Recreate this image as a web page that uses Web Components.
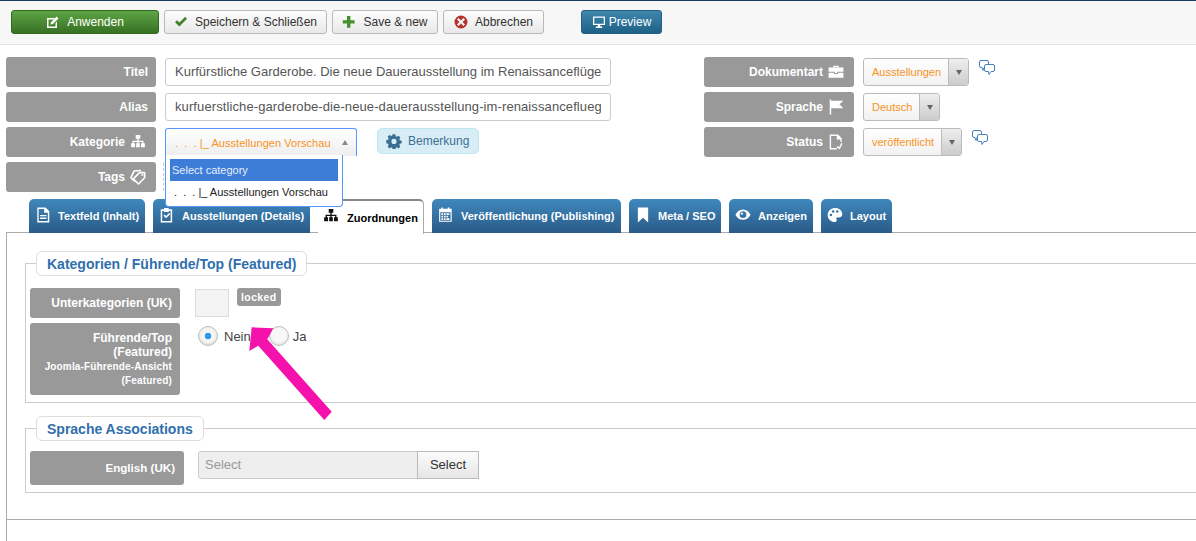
<!DOCTYPE html>
<html lang="de">
<head>
<meta charset="utf-8">
<title>Artikel bearbeiten</title>
<style>
html, body { margin: 0; padding: 0; background: #fff; }
body { width: 1196px; height: 541px; overflow: hidden; position: relative; font-family: "Liberation Sans", Arial, sans-serif; font-size: 13px; color: #555; }
</style>
</head>
<body>
<edit-page></edit-page>
<script>
// Kleine Helfer fuer die Icons
const ICONS = {
    edit: '<path d="M1 3h8L7.5 4.5H2.5v7h7V8L11 6.5V13H1z"/><path d="M5 7.2 10.6 1.6l1.9 1.9L6.9 9.1 4.6 9.5z"/>',
    check: '<path d="M1 7.2 3 5.2 5.4 7.6 11.2 1.8 13 3.8 5.4 11.4z"/>',
    plus: '<path d="M5 1h3.4v4.2h4.2v3.4H8.4v4.2H5V8.6H.8V5.2H5z"/>',
    cancel: '<path fill-rule="evenodd" d="M7 .5a6.5 6.5 0 1 1 0 13 6.5 6.5 0 0 1 0-13zM4.6 3 3 4.6 5.4 7 3 9.4 4.6 11 7 8.6 9.4 11 11 9.4 8.6 7 11 4.6 9.4 3 7 5.4z"/>',
    screen: '<path fill-rule="evenodd" d="M1 1.5h12v8.5H8.2v1.5h2V13H3.8v-1.5h2V10H1zM2.3 2.8v5.9h9.4V2.8z"/>',
    tree: '<path d="M5 .8h4v3.4H7.600v1.600h4.200v2.400H13v3.400H9.600V8.200h1V7H7.600v1.200h1v3.400H5.400V8.200h1V7h-3v1.200h1v3.400H1V8.200h1.200V5.800h4.200V4.200H5z"/>',
    tag: '<g fill="none" stroke="#fff" stroke-width="1.400" stroke-linejoin="round"><path d="M8.300 3.200h4.500v4.500l-5.400 5.400-4.500-4.500z"/><path d="M9.700 1.300 3.500 1.800 .8 7.600 4 11"/></g><circle cx="10.800" cy="5.200" r=".9"/>',
    case: '<path fill-rule="evenodd" d="M4.600 3V1.600h4.800V3H13.500v3.800H8v1H6v-1H.5V3zM5.800 2.600V3h2.400v-.4z"/><path d="M.5 7.600H5.200v1.200h3.600V7.600h4.700V12H.5z"/>',
    flag: '<path d="M1.500 .5h1.300v1h10.700L10 4.700l3.500 3.300H2.800v5.500H1.500z"/>',
    status: '<path fill-rule="evenodd" d="M1.500 .5h7.300L12 3.700V7h-1.200V4.800H7.700V1.700H2.700v10.600h5v1.200H1.500z"/><path d="M11.600 7.600l1 .9-2.300 4.800-2.800-1.700.7-1 1.600.9z"/>',
    doc: '<path fill-rule="evenodd" d="M2 .5h7.200L12.500 3.800v9.700H2zM3.200 1.700v10.600h8V5H8V1.700zM4.500 7h5.500v1.200H4.500zM4.500 9.200h5.500v1.400H4.500z"/>',
    clip: '<path fill-rule="evenodd" d="M1.500 2h3V.8h4V2h3v11.500h-10zM2.800 3.400v8.800h7.400V3.400H8.600v1H4.400v-1z"/><path d="M3.900 7.600l1-1 1.300 1.300 2.700-2.700 1 1-3.700 3.700z"/>',
    cal: '<path fill-rule="evenodd" d="M1 1.500h2V.5h1.500v1h4v-1H10v1h2v11.500H1zM2 4.500v7.500h9V4.500z"/><path d="M3 5.500h1.500V7H3zM5.200 5.500h1.500V7H5.200zM7.400 5.500h1.500V7H7.400zM9 5.500h1V7H9zM3 7.600h1.500v1.500H3zM5.200 7.600h1.500v1.500H5.200zM7.400 7.600h1.500v1.500H7.400zM3 9.800h1.500v1.500H3zM5.200 9.800h1.500v1.500H5.200zM7.400 9.800h2.600v1.500H7.400z"/>',
    bookmark: '<path d="M2.500 .5h9v13L7 9.500l-4.500 4z"/>',
    eye: '<path fill-rule="evenodd" d="M7 2.200c3 0 5.400 2 6.600 4.600C12.400 9.400 10 11.200 7 11.200S1.600 9.400.4 6.800C1.600 4.200 4 2.200 7 2.200zM7 3.800a2.900 2.900 0 1 0 0 5.800 2.900 2.900 0 0 0 0-5.800zM6 4.800a1 1 0 1 1 0 2 1 1 0 0 1 0-2z"/>',
    palette: '<path fill-rule="evenodd" d="M7 .8c3.600 0 6.400 2.300 6.400 5.300 0 2-1.500 3.100-3.200 3.100H8.800c-.8 0-1 .9-.5 1.500.6.8.2 2.500-1.500 2.500C3.300 13.200.6 10.400.6 7 .6 3.500 3.400.8 7 .8zM3.400 5.800a1.100 1.100 0 1 0 0 2.200 1.100 1.100 0 0 0 0-2.200zM5.400 2.800a1.100 1.100 0 1 0 0 2.200 1.100 1.100 0 0 0 0-2.200zM9 2.800A1.100 1.100 0 1 0 9 5a1.100 1.100 0 0 0 0-2.200z"/>',
    gear: '<path fill-rule="evenodd" d="M5.700.6h2.600l.4 1.800 1.100.5 1.600-1 1.800 1.800-1 1.600.5 1.100 1.800.4v2.600l-1.800.4-.5 1.100 1 1.600-1.800 1.800-1.600-1-1.100.5-.4 1.800H5.700l-.4-1.800-1.100-.5-1.600 1-1.800-1.800 1-1.600-.5-1.100-1.800-.4V6.200l1.800-.4.5-1.100-1-1.600 1.800-1.800 1.600 1 1.100-.5zM7 5a2.500 2.500 0 1 0 0 5 2.500 2.500 0 0 0 0-5z" transform="translate(.7 .6) scale(.9)"/>'
};

function icon(name, size, color) {
    return `<svg width="${size}" height="${size}" viewBox="0 0 14 14" fill="${color}" aria-hidden="true">${ICONS[name]}</svg>`;
}

const CHAT = `<svg class="chat" width="16" height="15" viewBox="0 0 16 15" fill="#fff" stroke="#4a7fc0" stroke-width="1"><path d="M2 .5h6a1.500 1.500 0 0 1 1.500 1.500v4A1.500 1.500 0 0 1 8 7.500H5l-1 3-1-3H2A1.500 1.500 0 0 1 .5 6V2A1.500 1.500 0 0 1 2 .5z"/><path d="M7 4.500h7A1.500 1.500 0 0 1 15.500 6v4a1.500 1.500 0 0 1-1.500 1.500h-2l-2 3-.5-3H7A1.500 1.500 0 0 1 5.500 10V6A1.500 1.500 0 0 1 7 4.500z"/></svg>`;

// Werkzeugleisten-Knopf
class ToolBtn extends HTMLElement {
    constructor() {
        super();
        this.attachShadow({ mode: 'open' });
    }

    connectedCallback() {
        const variant = this.getAttribute('variant') || '';
        const w = this.getAttribute('w');
        const colors = { green: '#fff', blue: '#fff' };
        const iconColor = this.getAttribute('icon-color') || colors[variant] || '#555';
        this.shadowRoot.innerHTML = `
            <style>
                :host { display: block; width: ${w}px; height: 24px; box-sizing: border-box; }
                .btn {
                    height: 100%; box-sizing: border-box; display: flex; align-items: center; justify-content: center; gap: 7px;
                    border: 1px solid #b9b9b9; border-radius: 3px;
                    background: linear-gradient(#fdfdfd, #e8e8e8);
                    font-size: 12px; color: #333;
                }
                .green { background: linear-gradient(#5da544, #377024); border-color: #2f6a20; color: #fff; }
                .blue { background: linear-gradient(#3f87ad, #1f6187); border-color: #235f80; color: #fff; gap: 3px; }
                svg { display: block; flex: none; }
            </style>
            <div class="btn ${variant}">${icon(this.getAttribute('icon'), 14, iconColor)}<slot></slot></div>`;
    }
}
customElements.define('tool-btn', ToolBtn);

// Graues Feld-Label
class FieldLabel extends HTMLElement {
    constructor() {
        super();
        this.attachShadow({ mode: 'open' });
    }

    connectedCallback() {
        const ic = this.getAttribute('icon');
        this.shadowRoot.innerHTML = `
            <style>
                :host {
                    display: flex; align-items: center; justify-content: flex-end; gap: 5px;
                    box-sizing: border-box; width: var(--w, 150px); min-height: 30px; padding: 0 8px;
                    background: #999; border-radius: 3px;
                    color: #fff; font-size: 12px; font-weight: bold; text-align: right; line-height: 14px;
                }
                svg { flex: none; display: block; margin-right: 2px; }
            </style>
            <slot></slot>${ic ? icon(ic, 16, '#fff') : ''}`;
    }
}
customElements.define('field-label', FieldLabel);

// Einfaches Textfeld
class TextBox extends HTMLElement {
    constructor() {
        super();
        this.attachShadow({ mode: 'open' });
    }

    connectedCallback() {
        this.shadowRoot.innerHTML = `
            <style>
                :host {
                    display: block; box-sizing: border-box; width: 446px; height: 28px; margin: 1px 0;
                    padding: 0 9px; border: 1px solid #ccc; border-radius: 3px; background: #fff;
                    font-size: 13px; line-height: 26px; color: #555;
                }
                div { white-space: nowrap; overflow: hidden; }
            </style>
            <div><slot></slot></div>`;
    }
}
customElements.define('text-box', TextBox);

// Orange Auswahl mit Pfeil-Kasten
class PickBox extends HTMLElement {
    constructor() {
        super();
        this.attachShadow({ mode: 'open' });
    }

    connectedCallback() {
        this.shadowRoot.innerHTML = `
            <style>
                :host { display: flex; align-items: stretch; box-sizing: border-box; height: 28px; margin: 1px 0;
                    border: 1px solid #bbb; border-radius: 3px; overflow: hidden;
                    background: linear-gradient(#fff, #f2f2f2); font-size: 11px; color: #f7931e; flex: none; }
                .txt { padding: 0 7px 0 8px; line-height: 26px; white-space: nowrap; }
                .arrow { width: 19px; border-left: 1px solid #bbb; background: linear-gradient(#eee, #ccc); display: flex; align-items: center; justify-content: center; }
                .arrow i { border: 3.5px solid transparent; border-top: 5px solid #666; border-bottom: 0; display: block; }
            </style>
            <div class="txt"><slot></slot></div><div class="arrow"><i></i></div>`;
    }
}
customElements.define('pick-box', PickBox);

// Kategorie-Auswahl, aufgeklappt
class CategorySelect extends HTMLElement {
    constructor() {
        super();
        this.attachShadow({ mode: 'open' });
    }

    connectedCallback() {
        this.shadowRoot.innerHTML = `
            <style>
                :host { display: block; position: relative; width: 192px; height: 28px; margin: 1px 0; font-size: 11px; }
                .head {
                    box-sizing: border-box; height: 28px; padding-left: 9px; display: flex; align-items: center; justify-content: space-between;
                    border: 1px solid #5897fb; border-bottom: 0; border-radius: 3px 3px 0 0;
                    background: linear-gradient(#fff, #eee); color: #f7931e; white-space: nowrap; letter-spacing: .05px;
                }
                .head i { border: 3.5px solid transparent; border-bottom: 5px solid #888; border-top: 0; margin-right: 8px; display: block; }
                .drop {
                    position: absolute; left: 0; top: 27px; width: 178px; height: 52px; box-sizing: border-box; padding: 4px;
                    background: #fff; border: 1px solid #5897fb; border-top: 0; border-radius: 0 0 4px 4px; z-index: 5;
                    color: #222;
                }
                .opt { height: 22px; line-height: 22px; padding-left: 2px; white-space: nowrap; }
                .on { background: #3d7dd7; color: #e6eefa; }
                .opt + .opt { padding-left: 4px; }
            </style>
            <div class="head"><span>.&nbsp; .&nbsp; . |_ Ausstellungen Vorschau</span><i></i></div>
            <div class="drop">
                <div class="opt on">Select category</div>
                <div class="opt">.&nbsp; .&nbsp; . |_ Ausstellungen Vorschau</div>
            </div>`;
    }
}
customElements.define('category-select', CategorySelect);

// Reiter
class TabItem extends HTMLElement {
    constructor() {
        super();
        this.attachShadow({ mode: 'open' });
    }

    connectedCallback() {
        const active = this.hasAttribute('active');
        this.shadowRoot.innerHTML = `
            <style>
                :host { display: block; width: ${this.getAttribute('w')}px; height: 34px; box-sizing: border-box; position: relative; }
                .tab {
                    height: 100%; box-sizing: border-box; display: flex; align-items: center; padding: 0 0 0 6px; gap: 7px;
                    border-radius: 5px 5px 0 0; font-size: 11px; font-weight: bold; white-space: nowrap;
                    background: linear-gradient(#3f88bd, #2a5a87); color: #fff;
                }
                .tab.active { background: #fff; color: #000; border: 1px solid #aaa; border-bottom: 0; border-top: 2px solid #888; border-left: 0; padding-left: 5px; gap: 8px; height: 35px; position: relative; z-index: 2; }
                svg { display: block; flex: none; margin-top: -3px; }
            </style>
            <div class="tab ${active ? 'active' : ''}">${icon(this.getAttribute('icon'), 16, active ? '#111' : '#fff')}<slot></slot></div>`;
    }
}
customElements.define('tab-item', TabItem);

// Feldgruppe mit Legende
class FieldGroup extends HTMLElement {
    constructor() {
        super();
        this.attachShadow({ mode: 'open' });
    }

    connectedCallback() {
        this.shadowRoot.innerHTML = `
            <style>
                :host { display: block; margin-right: -30px; }
                fieldset { margin: 0; padding: var(--pt, 12px) 0 7px 4px; border: 1px solid #ccc; border-radius: 0; min-width: 0; height: var(--h); box-sizing: border-box; }
                legend {
                    box-sizing: border-box; height: 25px; margin: 0 6px; padding: 0 10px; line-height: 25px;
                    border: 1px solid #ddd; border-radius: 6px; background: #fff;
                    color: #2f6fac; font-size: 14px; font-weight: bold;
                }
            </style>
            <fieldset><legend>${this.getAttribute('legend')}</legend><slot></slot></fieldset>`;
    }
}
customElements.define('field-group', FieldGroup);

// Radio mit Beschriftung
class RadioMark extends HTMLElement {
    constructor() {
        super();
        this.attachShadow({ mode: 'open' });
    }

    connectedCallback() {
        const on = this.hasAttribute('checked');
        this.shadowRoot.innerHTML = `
            <style>
                :host { display: flex; align-items: center; gap: var(--gap, 6px); font-size: 13px; color: #444; }
                .dot { width: 20px; height: 20px; box-sizing: border-box; border-radius: 50%; border: 1px solid #bbb;
                    background: radial-gradient(circle, ${on ? '#2f9be8 0 3px, #f4f4f4 3.6px' : '#f8f8f8 0 100%'});
                    box-shadow: inset 0 -1px 2px rgba(0,0,0,.12); }
            </style>
            <div class="dot"></div><slot></slot>`;
    }
}
customElements.define('radio-mark', RadioMark);

// Die ganze Seite
class EditPage extends HTMLElement {
    constructor() {
        super();
        this.attachShadow({ mode: 'open' });
    }

    connectedCallback() {
        this.shadowRoot.innerHTML = `
            <style>
                :host { display: block; position: relative; width: 1196px; height: 541px; overflow: hidden; }
                .toolbar { height: 45px; box-sizing: border-box; border-top: 1px solid #1a3a66; border-bottom: 1px solid #e3e3e3; background: #f7f7f7;
                    display: flex; gap: 5px; padding: 9px 0 0 11px; }
                .toolbar .spacer { width: 27px; }
                .head { display: grid; grid-template-columns: 698px 1fr; padding: 12px 0 0 6px; }
                .col { display: flex; flex-direction: column; gap: 5px; }
                .row { display: flex; gap: 9px; align-items: flex-start; height: 30px; }
                .note { display: flex; align-items: center; gap: 6px; box-sizing: border-box; width: 102px; height: 26px; margin: 1px 0 0 11px; padding-left: 8px;
                    background: #d9edf7; border: 1px solid #bce8f1; border-radius: 5px; color: #3a6f93; font-size: 12px; }
                .tagline { width: 20px; height: 28px; margin-top: 1px; margin-left: -2px; border-left: 1px dashed #ccc; }
                .chat { margin: 3px 0 0 1px; display: block; }
                .tabs { display: flex; gap: 8px; padding: 7px 0 0 29px; position: relative; }
                .panel { margin-left: 6px; height: 288px; box-sizing: border-box; margin-top: -1px; border: 1px solid #aaa; border-right: 0; padding: 18px 0 0 18px; }
                .panel field-group + field-group { margin-top: 13px; }
                .rest { margin-left: 6px; height: 22px; border-left: 1px solid #aaa; }
                .frow { display: flex; align-items: flex-start; }
                .frow + .frow { margin-top: 5px; }
                .lockbox { width: 34px; height: 28px; box-sizing: border-box; margin: 1px 0 0 15px; background: #f3f3f3; border: 1px solid #ddd; }
                .badge { margin: 0 0 0 8px; height: 18px; padding: 0 4px; box-sizing: border-box; background: #999; border-radius: 3px; color: #fff; font-size: 10.5px; font-weight: bold; line-height: 18px; letter-spacing: .4px; }
                .radios { display: flex; margin: 3px 0 0 18px; }
                .radios radio-mark + radio-mark { margin-left: 18px; --gap: 4px; }
                small { display: block; font-size: 10px; line-height: 14px; margin-top: 1px; letter-spacing: .15px; }
                .tall { --w: 150px; min-height: 72px; }
                .assoc { display: flex; margin-left: 14px; height: 28px; font-size: 13px; }
                .assoc .inp { width: 220px; box-sizing: border-box; padding-left: 6px; background: #eee; border: 1px solid #ccc; border-radius: 3px 0 0 3px; color: #999; line-height: 26px; }
                .assoc .bt { width: 62px; box-sizing: border-box; text-align: center; margin-left: -1px; border: 1px solid #bbb; background: linear-gradient(#fbfbfb, #e6e6e6); color: #333; line-height: 26px; }
                .arrow { position: absolute; left: 0; top: 0; pointer-events: none; z-index: 9; }
            </style>
            <div class="toolbar">
                <tool-btn w="148" variant="green" icon="edit">Anwenden</tool-btn>
                <tool-btn w="163" icon="check" icon-color="#46802c">Speichern &amp; Schließen</tool-btn>
                <tool-btn w="106" icon="plus" icon-color="#46902c">Save &amp; new</tool-btn>
                <tool-btn w="101" icon="cancel" icon-color="#b5322a">Abbrechen</tool-btn>
                <div class="spacer"></div>
                <tool-btn w="81" variant="blue" icon="screen">Preview</tool-btn>
            </div>
            <div class="head">
                <div class="col">
                    <div class="row"><field-label>Titel</field-label><text-box>Kurfürstliche Garderobe. Die neue Dauerausstellung im Renaissanceflüge</text-box></div>
                    <div class="row"><field-label>Alias</field-label><text-box style="letter-spacing:.1px">kurfuerstliche-garderobe-die-neue-dauerausstellung-im-renaissancefluegel</text-box></div>
                    <div class="row"><field-label icon="tree">Kategorie</field-label><category-select></category-select>
                        <div class="note">${icon('gear', 16, '#3a6f93')}Bemerkung</div></div>
                    <div class="row"><field-label icon="tag">Tags</field-label><div class="tagline"></div></div>
                </div>
                <div class="col">
                    <div class="row"><field-label icon="case">Dokumentart</field-label><pick-box>Ausstellungen</pick-box>${CHAT}</div>
                    <div class="row"><field-label icon="flag">Sprache</field-label><pick-box>Deutsch</pick-box></div>
                    <div class="row"><field-label icon="status">Status</field-label><pick-box>veröffentlicht</pick-box>${CHAT}</div>
                </div>
            </div>
            <div class="tabs">
                <tab-item w="116" icon="doc">Textfeld (Inhalt)</tab-item>
                <tab-item w="157" icon="clip">Ausstellungen (Details)</tab-item>
                <tab-item w="106" icon="tree" active>Zuordnungen</tab-item>
                <tab-item w="189" icon="cal">Veröffentlichung (Publishing)</tab-item>
                <tab-item w="92" icon="bookmark">Meta / SEO</tab-item>
                <tab-item w="84" icon="eye">Anzeigen</tab-item>
                <tab-item w="71" icon="palette">Layout</tab-item>
            </div>
            <div class="panel">
                <field-group legend="Kategorien / Führende/Top (Featured)" style="--h:152px">
                    <div class="frow"><field-label>Unterkategorien (UK)</field-label><div class="lockbox"></div><div class="badge">locked</div></div>
                    <div class="frow"><field-label class="tall"><div>Führende/Top (Featured)<small>Joomla-Führende-Ansicht (Featured)</small></div></field-label>
                        <div class="radios"><radio-mark checked>Nein</radio-mark><radio-mark>Ja</radio-mark></div></div>
                </field-group>
                <field-group legend="Sprache Associations" style="--h:77px;--pt:10px">
                    <div class="frow"><field-label style="--w:154px;min-height:34px;font-size:11.6px;padding-right:9px">English (UK)</field-label>
                        <div class="assoc"><div class="inp">Select</div><div class="bt">Select</div></div></div>
                </field-group>
            </div>
            <div class="rest"></div>
            <svg class="arrow" width="1196" height="541" viewBox="0 0 1196 541"><polygon fill="#f511ab" points="251.700,327.300 273.300,328.300 267.300,339.300 331.700,411.700 324.300,420 258.300,345.700 249.300,351"/></svg>`;
    }
}
customElements.define('edit-page', EditPage);
</script>
</body>
</html>
